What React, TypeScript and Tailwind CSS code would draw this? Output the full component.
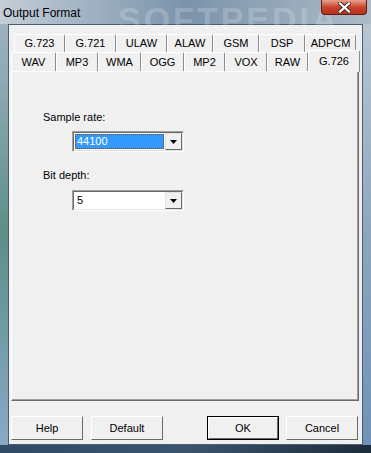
import clsx from "clsx";

const rowOne: [string, string][] = [
  ["G.723", "w-[51px]"],
  ["G.721", "w-[51px]"],
  ["ULAW", "w-[51px]"],
  ["ALAW", "w-[46px]"],
  ["GSM", "w-[46px]"],
  ["DSP", "w-[46px]"],
  ["ADPCM", "w-[51px]"],
];

const rowTwo: [string, string][] = [
  ["WAV", "w-[45px]"],
  ["MP3", "w-[42px]"],
  ["WMA", "w-[43px]"],
  ["OGG", "w-[43px]"],
  ["MP2", "w-[41px]"],
  ["VOX", "w-[42px]"],
  ["RAW", "w-[41px]"],
];

function Tab({ label, w, selected }: { label: string; w: string; selected?: boolean }) {
  return (
    <div
      className={clsx(
        w,
        "flex shrink-0 items-center justify-center rounded-t-[2px] border-l border-t border-r border-l-white border-t-white border-r-[#8c8c8c] bg-[#f0f0f0]",
        selected ? "relative z-10 -mb-px h-[22px] items-start pt-[2px]" : "h-full"
      )}
    >
      {label}
    </div>
  );
}

function Arrow() {
  return (
    <div className="flex h-full w-[17px] items-center justify-center border-t border-l border-t-[#e3e3e3] border-l-[#e3e3e3] border-r border-b border-r-[#696969] border-b-[#696969] bg-[#f0f0f0]">
      <svg width="7" height="4" viewBox="0 0 7 4">
        <path d="M0 0h7L3.5 4z" fill="#000" />
      </svg>
    </div>
  );
}

function Combo({ value, focused }: { value: string; focused?: boolean }) {
  return (
    <div className="ml-[29px] h-[21px] w-[112px] border-t border-l border-t-[#a0a0a0] border-l-[#a0a0a0] border-r border-b border-r-white border-b-white">
      <div className="flex h-full border-t border-l border-t-[#696969] border-l-[#696969] border-r border-b border-r-[#e3e3e3] border-b-[#e3e3e3] bg-white">
        <div className="flex flex-1 items-center p-px">
          {focused ? (
            <div className="flex h-full w-full items-center border border-dotted border-[#7a4a00] bg-[#3399ff] pl-[1px] text-white">
              {value}
            </div>
          ) : (
            <div className="pl-[2px]">{value}</div>
          )}
        </div>
        <Arrow />
      </div>
    </div>
  );
}

function Button({ label, primary }: { label: string; primary?: boolean }) {
  return (
    <div className={clsx("h-[24px] w-[72px]", primary ? "border border-black" : "")}>
      <div className="flex h-full items-center justify-center border-t border-l border-t-white border-l-white border-r border-b border-r-[#696969] border-b-[#696969] bg-[#f0f0f0]">
        {label}
      </div>
    </div>
  );
}

export default function App() {
  return (
    <div
      className="relative flex h-[453px] w-[371px] flex-col overflow-hidden bg-gradient-to-b from-[#a9b8c6] via-[#7f96ab] to-[#46586c]"
      style={{ fontFamily: '"Liberation Sans", Arial, sans-serif' }}
    >
      {/* title bar */}
      <div className="relative flex h-[24px] items-start bg-gradient-to-r from-[#c4ced7] via-[#7a93ab] to-[#aebbc7]">
        <div className="pointer-events-none absolute left-[118px] top-[-6px] text-[34px] font-bold tracking-[3px] text-white/20">
          SOFTPEDIA
        </div>
        <span className="relative ml-[3px] mt-[4px] text-[12px] text-black">Output Format</span>
        <div className="relative ml-auto mr-[4px] flex h-[15px] w-[46px] items-center justify-center rounded-b-[4px] border border-t-0 border-[#5a1e14] bg-gradient-to-b from-[#e8a08e] via-[#c8442d] to-[#b7301d]">
          <svg width="13" height="11" viewBox="0 0 13 11">
            <path d="M2 1.5l9 8M11 1.5l-9 8" stroke="#3c2a2a" strokeWidth="4" strokeLinecap="square" />
            <path d="M2 1.5l9 8M11 1.5l-9 8" stroke="#fff" strokeWidth="2.2" strokeLinecap="square" />
          </svg>
        </div>
      </div>

      <div className="flex flex-1">
        <div className="w-[8px] bg-gradient-to-b from-[#9fb3c2] via-[#5d8f86] to-[#89a9c8]" />
        {/* client */}
        <div className="flex flex-1 flex-col border border-[#4b5d70] bg-[#f0f0f0] text-[11px] text-black">
          <div className="mt-[9px] flex h-[18px] pl-[5px]">
            {rowOne.map(([l, w]) => (
              <Tab key={l} label={l} w={w} />
            ))}
          </div>
          <div className="flex h-[19px] items-end pl-[2px]">
            {rowTwo.map(([l, w]) => (
              <Tab key={l} label={l} w={w} />
            ))}
            <Tab label="G.726" w="w-[52px]" selected />
          </div>
          <div className="ml-[2px] h-[330px] w-[348px] border-l border-t border-white border-r border-b border-r-[#696969] border-b-[#696969]">
            <div className="flex h-full flex-col border-r border-b border-r-[#a0a0a0] border-b-[#a0a0a0] pl-[31px] pt-[39px]">
              <div className="leading-[13px]">Sample rate:</div>
              <div className="mt-[7px]">
                <Combo value="44100" focused />
              </div>
              <div className="mt-[17px] leading-[13px]">Bit depth:</div>
              <div className="mt-[8px]">
                <Combo value="5" />
              </div>
            </div>
          </div>
          <div className="mt-[15px] flex pl-[2px] pr-[4px]">
            <Button label="Help" />
            <div className="ml-[8px]">
              <Button label="Default" />
            </div>
            <div className="ml-auto">
              <Button label="OK" primary />
            </div>
            <div className="ml-[7px]">
              <Button label="Cancel" />
            </div>
          </div>
        </div>
        <div className="w-[8px] bg-gradient-to-b from-[#b8c6d2] via-[#8ea6bd] to-[#6f93b8]" />
      </div>
      <div className="h-[8px] bg-gradient-to-r from-[#2e4a66] via-[#3c556e] to-[#1d2c3b]" />
    </div>
  );
}
